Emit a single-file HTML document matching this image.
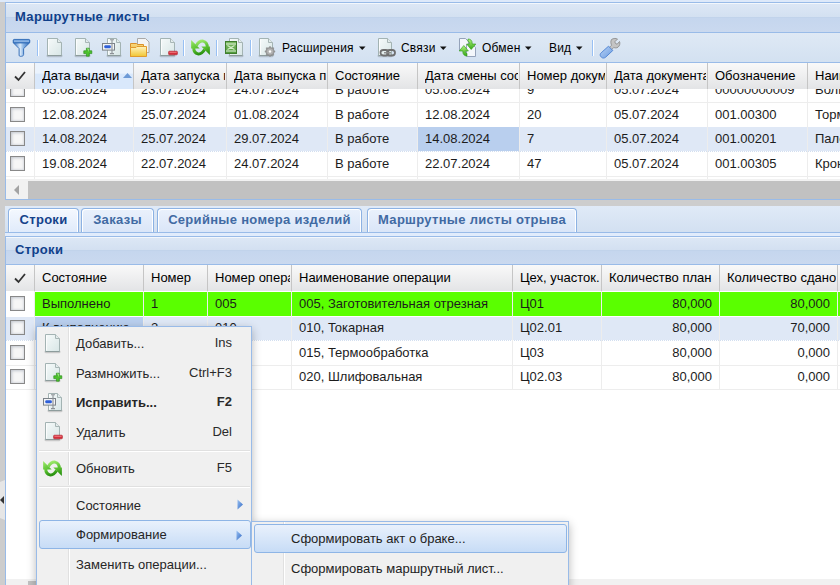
<!DOCTYPE html><html><head><meta charset="utf-8"><style>
html,body{margin:0;padding:0;width:840px;height:585px;overflow:hidden;background:#cdcdcd;font-family:"Liberation Sans", sans-serif;}
div{box-sizing:border-box;}
</style></head><body>
<div style="position:absolute;left:0px;top:0px;width:840px;height:2px;background:#dde9fa"></div>
<div style="position:absolute;left:5px;top:2px;width:835px;height:198px;background:#fff;border:1px solid #99bbe8;border-right:none"></div>
<div style="position:absolute;left:6px;top:3px;width:834px;height:29px;background:linear-gradient(#f3f7fc 0,#f3f7fc 1px,#dce7f5 1px,#d3e0f1 14px,#c1d3eb 14px,#c1d3eb 15px,#c5d6ee 15px,#cad9ef 100%)"></div>
<div style="position:absolute;left:6px;top:32px;width:834px;height:1px;background:#99bbe8"></div>
<div style="position:absolute;left:15px;top:8.20px;font-size:13px;line-height:17px;color:#0f3f8a;font-weight:bold;white-space:nowrap;letter-spacing:0.35px">Маршрутные листы</div>
<div style="position:absolute;left:6px;top:33px;width:834px;height:29px;background:linear-gradient(#dfe9f5,#d3e1f1)"></div>
<div style="position:absolute;left:6px;top:62px;width:834px;height:1px;background:#99bbe8"></div>
<svg style="position:absolute;left:13px;top:39px;overflow:visible" width="17" height="18" viewBox="0 0 17 18"><defs><linearGradient id="g1" x1="0" y1="0" x2="1" y2="0"><stop offset="0" stop-color="#2d6cc0"/><stop offset="0.42" stop-color="#dcebf9"/><stop offset="0.6" stop-color="#8fb8e6"/><stop offset="1" stop-color="#2a66b6"/></linearGradient><linearGradient id="g2" x1="0" y1="0" x2="0" y2="1"><stop offset="0" stop-color="#3f7fcf"/><stop offset="0.5" stop-color="#9cc0ea"/><stop offset="1" stop-color="#2f6cbc"/></linearGradient></defs><path d="M0.3 1 H16.7 V3.8 L10.6 9.6 V15.6 C10.6 16.6 9.6 17.3 8.4 17.3 H7.2 C6.5 17.3 6.1 16.8 6.1 16.2 V9.6 L0.3 3.8 Z" fill="url(#g1)" stroke="#2f69b4" stroke-width="0.9"/><rect x="0.4" y="0.4" width="16.2" height="3.6" rx="1" fill="url(#g2)" stroke="#2f69b4" stroke-width="0.8"/></svg>
<div style="position:absolute;left:37px;top:40px;width:1px;height:16px;background:#98c0f4;box-shadow:1px 0 0 #fff"></div>
<svg style="position:absolute;left:47px;top:38px;overflow:visible" width="15" height="19" viewBox="0 0 15 19"><defs><linearGradient id="g3" x1="0" y1="0" x2="1" y2="1"><stop offset="0" stop-color="#f6fafa"/><stop offset="1" stop-color="#d8e6e6"/></linearGradient></defs><rect x="-0.5" y="16.2" width="16" height="3" rx="1.5" fill="#000" opacity="0.16"/><path d="M0.5 0.5 H10.5 L14.5 4.5 V17.5 H0.5 Z" fill="url(#g3)" stroke="#a3b3b3" stroke-width="1"/><path d="M0.5 17.5 H14.5" stroke="#8d9c9c" stroke-width="1"/><path d="M10.5 0.5 V4.5 H14.5" fill="#e3ecec" stroke="#a8b6b6" stroke-width="1"/><path d="M1.5 1.5 V16.5" stroke="#ffffff" stroke-width="1" opacity="0.8"/></svg>
<svg style="position:absolute;left:75px;top:38px;overflow:visible" width="18" height="19" viewBox="0 0 18 19"><defs><linearGradient id="g4" x1="0" y1="0" x2="1" y2="1"><stop offset="0" stop-color="#f6fafa"/><stop offset="1" stop-color="#d8e6e6"/></linearGradient></defs><rect x="-0.5" y="16.2" width="16" height="3" rx="1.5" fill="#000" opacity="0.16"/><path d="M0.5 0.5 H10.5 L14.5 4.5 V17.5 H0.5 Z" fill="url(#g4)" stroke="#a3b3b3" stroke-width="1"/><path d="M0.5 17.5 H14.5" stroke="#8d9c9c" stroke-width="1"/><path d="M10.5 0.5 V4.5 H14.5" fill="#e3ecec" stroke="#a8b6b6" stroke-width="1"/><path d="M1.5 1.5 V16.5" stroke="#ffffff" stroke-width="1" opacity="0.8"/><path d="M11.4 10.2 H14.2 V12.8 H16.8 V15.6 H14.2 V18.2 H11.4 V15.6 H8.8 V12.8 H11.4 Z" fill="#4cc22c" stroke="#2e8f1e" stroke-width="0.7" stroke-linejoin="round"/><path d="M12 11 H13.6 V13.4" stroke="#b4f09c" stroke-width="0.7" fill="none"/></svg>
<svg style="position:absolute;left:102px;top:38px;overflow:visible" width="19" height="19" viewBox="0 0 19 19"><defs><linearGradient id="g5" x1="0" y1="0" x2="1" y2="1"><stop offset="0" stop-color="#f6fafa"/><stop offset="1" stop-color="#d8e6e6"/></linearGradient></defs><rect x="4.5" y="16.2" width="15" height="3" rx="1.5" fill="#000" opacity="0.16"/><path d="M5.5 0.5 H14.5 L18.5 4.5 V17.5 H5.5 Z" fill="url(#g5)" stroke="#a3b3b3" stroke-width="1"/><path d="M5.5 17.5 H18.5" stroke="#8d9c9c" stroke-width="1"/><path d="M14.5 0.5 V4.5 H18.5" fill="#e3ecec" stroke="#a8b6b6" stroke-width="1"/><path d="M6.5 1.5 V16.5" stroke="#ffffff" stroke-width="1" opacity="0.8"/><rect x="0.5" y="5.5" width="12" height="6.6" fill="#f2f4f6" stroke="#7c8288" stroke-width="1"/><rect x="2.3" y="7.3" width="6.5" height="3" rx="1" fill="#2f5fd8"/><path d="M8 1.8 H12 M10 1.8 V15.6 M8 15.6 H12" stroke="#8d9296" stroke-width="1.1" fill="none"/></svg>
<svg style="position:absolute;left:130px;top:38px;overflow:visible" width="20" height="19" viewBox="0 0 20 19"><defs><linearGradient id="g6" x1="0" y1="0" x2="0" y2="1"><stop offset="0" stop-color="#fff4c0"/><stop offset="1" stop-color="#f1c531"/></linearGradient><linearGradient id="g7" x1="0" y1="0" x2="0" y2="1"><stop offset="0" stop-color="#f9d87a"/><stop offset="1" stop-color="#e8a93a"/></linearGradient></defs><path d="M7.5 0.5 H15.5 L19 4 V14.5 H7.5 Z" fill="#f4f4f4" stroke="#a9a9a9" stroke-width="1"/><path d="M0.5 5.5 H6.5 L7.5 6.5 H13.5 V18.5 H0.5 Z" fill="url(#g7)" stroke="#d9902a" stroke-width="1"/><path d="M0.5 9.5 H6 L7 8.5 H16.5 V18.5 H0.5 Z" fill="url(#g6)" stroke="#e09a2c" stroke-width="1"/></svg>
<svg style="position:absolute;left:160px;top:38px;overflow:visible" width="18" height="19" viewBox="0 0 18 19"><defs><linearGradient id="g8" x1="0" y1="0" x2="1" y2="1"><stop offset="0" stop-color="#f6fafa"/><stop offset="1" stop-color="#d8e6e6"/></linearGradient></defs><rect x="-0.5" y="16.2" width="16" height="3" rx="1.5" fill="#000" opacity="0.16"/><path d="M0.5 0.5 H10.5 L14.5 4.5 V17.5 H0.5 Z" fill="url(#g8)" stroke="#a3b3b3" stroke-width="1"/><path d="M0.5 17.5 H14.5" stroke="#8d9c9c" stroke-width="1"/><path d="M10.5 0.5 V4.5 H14.5" fill="#e3ecec" stroke="#a8b6b6" stroke-width="1"/><path d="M1.5 1.5 V16.5" stroke="#ffffff" stroke-width="1" opacity="0.8"/><rect x="8.6" y="13.2" width="8.8" height="3.6" rx="0.8" fill="#d42f3b" stroke="#b01e2a" stroke-width="0.6"/><rect x="9.4" y="13.8" width="7.2" height="1" fill="#ee7a82"/></svg>
<div style="position:absolute;left:183px;top:40px;width:1px;height:16px;background:#98c0f4;box-shadow:1px 0 0 #fff"></div>
<svg style="position:absolute;left:191px;top:39px;overflow:visible" width="19" height="17" viewBox="0 0 19 17"><defs><linearGradient id="g9" x1="0" y1="0" x2="0.5" y2="1"><stop offset="0" stop-color="#a2ec70"/><stop offset="1" stop-color="#58c030"/></linearGradient><linearGradient id="g10" x1="0" y1="0" x2="0.5" y2="1"><stop offset="0" stop-color="#6cd03c"/><stop offset="1" stop-color="#2c9412"/></linearGradient></defs><path d="M5.4 6.4 C7.5 2.8 10 1.8 12 2.1 C14.6 2.6 16.3 5 16.3 8.4" stroke="url(#g9)" stroke-width="3" fill="none"/><path d="M0.1 1.0 L0.1 9.6 L8.7 9.6 Z" fill="url(#g9)"/><path d="M13.6 10.6 C11.5 14.2 9 15.2 7 14.9 C4.4 14.4 2.7 12 2.7 8.6" stroke="url(#g10)" stroke-width="3" fill="none"/><path d="M18.9 16.0 L18.9 7.4 L10.3 7.4 Z" fill="url(#g10)"/></svg>
<div style="position:absolute;left:216px;top:40px;width:1px;height:16px;background:#98c0f4;box-shadow:1px 0 0 #fff"></div>
<svg style="position:absolute;left:225px;top:38px;overflow:visible" width="18" height="19" viewBox="0 0 18 19"><defs><linearGradient id="g12" x1="0" y1="0" x2="1" y2="1"><stop offset="0" stop-color="#f6fafa"/><stop offset="1" stop-color="#d8e6e6"/></linearGradient></defs><rect x="3.5" y="16.2" width="15" height="3" rx="1.5" fill="#000" opacity="0.16"/><path d="M4.5 0.5 H13.5 L17.5 4.5 V17.5 H4.5 Z" fill="url(#g12)" stroke="#a3b3b3" stroke-width="1"/><path d="M4.5 17.5 H17.5" stroke="#8d9c9c" stroke-width="1"/><path d="M13.5 0.5 V4.5 H17.5" fill="#e3ecec" stroke="#a8b6b6" stroke-width="1"/><path d="M5.5 1.5 V16.5" stroke="#ffffff" stroke-width="1" opacity="0.8"/><defs><linearGradient id="g11" x1="0" y1="0" x2="0" y2="1"><stop offset="0" stop-color="#7dbb63"/><stop offset="1" stop-color="#4f9a3c"/></linearGradient></defs><rect x="0.5" y="3.5" width="11" height="12" fill="url(#g11)" stroke="#3f7d2e" stroke-width="1"/><path d="M1 6 H11 M1 13 H11" stroke="#e6f3df" stroke-width="1.1"/><path d="M2.5 7.5 L6 9.5 L2.5 11.5 M9.5 7.5 L6 9.5 L9.5 11.5" stroke="#d2ecc6" stroke-width="1.2" fill="none"/></svg>
<div style="position:absolute;left:250px;top:40px;width:1px;height:16px;background:#98c0f4;box-shadow:1px 0 0 #fff"></div>
<svg style="position:absolute;left:259px;top:38px;overflow:visible" width="17" height="19" viewBox="0 0 17 19"><defs><linearGradient id="g13" x1="0" y1="0" x2="1" y2="1"><stop offset="0" stop-color="#f6fafa"/><stop offset="1" stop-color="#d8e6e6"/></linearGradient></defs><rect x="-0.5" y="16.2" width="15" height="3" rx="1.5" fill="#000" opacity="0.16"/><path d="M0.5 0.5 H9.5 L13.5 4.5 V17.5 H0.5 Z" fill="url(#g13)" stroke="#a3b3b3" stroke-width="1"/><path d="M0.5 17.5 H13.5" stroke="#8d9c9c" stroke-width="1"/><path d="M9.5 0.5 V4.5 H13.5" fill="#e3ecec" stroke="#a8b6b6" stroke-width="1"/><path d="M1.5 1.5 V16.5" stroke="#ffffff" stroke-width="1" opacity="0.8"/><polygon points="16.20,13.50 14.51,14.95 14.68,17.18 12.45,17.01 11.00,18.70 9.55,17.01 7.32,17.18 7.49,14.95 5.80,13.50 7.49,12.05 7.32,9.82 9.55,9.99 11.00,8.30 12.45,9.99 14.68,9.82 14.51,12.05" fill="#9a9a9a" stroke="#7f7f7f" stroke-width="0.6"/><circle cx="11" cy="13.5" r="3" fill="#b4b4b4"/><circle cx="11" cy="13.5" r="1.2" fill="#ffffff"/></svg>
<div style="position:absolute;left:282px;top:40.03px;font-size:12px;line-height:16px;color:#000;font-weight:normal;white-space:nowrap;letter-spacing:0.2px">Расширения</div>
<svg style="position:absolute;left:359px;top:46px;overflow:visible" width="7" height="4" viewBox="0 0 7 4"><path d="M0 0.5 H6.5 L3.25 4 Z" fill="#111"/></svg>
<svg style="position:absolute;left:378px;top:38px;overflow:visible" width="18" height="19" viewBox="0 0 18 19"><defs><linearGradient id="g14" x1="0" y1="0" x2="1" y2="1"><stop offset="0" stop-color="#f6fafa"/><stop offset="1" stop-color="#d8e6e6"/></linearGradient></defs><rect x="-0.5" y="16.2" width="15" height="3" rx="1.5" fill="#000" opacity="0.16"/><path d="M0.5 0.5 H9.5 L13.5 4.5 V17.5 H0.5 Z" fill="url(#g14)" stroke="#a3b3b3" stroke-width="1"/><path d="M0.5 17.5 H13.5" stroke="#8d9c9c" stroke-width="1"/><path d="M9.5 0.5 V4.5 H13.5" fill="#e3ecec" stroke="#a8b6b6" stroke-width="1"/><path d="M1.5 1.5 V16.5" stroke="#ffffff" stroke-width="1" opacity="0.8"/><rect x="2.5" y="12" width="8" height="5.5" rx="2.7" fill="none" stroke="#6f6f6f" stroke-width="1.8"/><rect x="9" y="12" width="8" height="5.5" rx="2.7" fill="none" stroke="#6f6f6f" stroke-width="1.8"/><path d="M6 14.75 H13" stroke="#8a8a8a" stroke-width="1.4"/></svg>
<div style="position:absolute;left:401px;top:40.03px;font-size:12px;line-height:16px;color:#000;font-weight:normal;white-space:nowrap;letter-spacing:0.2px">Связи</div>
<svg style="position:absolute;left:440px;top:46px;overflow:visible" width="7" height="4" viewBox="0 0 7 4"><path d="M0 0.5 H6.5 L3.25 4 Z" fill="#111"/></svg>
<svg style="position:absolute;left:459px;top:38px;overflow:visible" width="17" height="19" viewBox="0 0 17 19"><defs><linearGradient id="g15" x1="0" y1="0" x2="0" y2="1"><stop offset="0" stop-color="#b0f27e"/><stop offset="1" stop-color="#36a816"/></linearGradient></defs><path d="M0.5 0.5 H6.5 L9.5 3.5 V12.5 H0.5 Z" fill="#f4f7fb" stroke="#95a3ba" stroke-width="1"/><path d="M7.5 6.5 H13.5 L16.5 9.5 V18.5 H7.5 Z" fill="#f4f7fb" stroke="#95a3ba" stroke-width="1"/><path d="M9 1 C11.5 1 13.2 2.5 13.2 5.2 V6 H16.8 L12.2 11.5 L7.6 6 H10.6 V5.4 C10.6 4.2 10 3.6 9 3.6 Z" fill="url(#g15)" stroke="#2c9a12" stroke-width="0.6"/><path d="M8 18 C5.5 18 3.8 16.5 3.8 13.8 V13 H0.2 L4.8 7.5 L9.4 13 H6.4 V13.6 C6.4 14.8 7 15.4 8 15.4 Z" fill="url(#g15)" stroke="#2c9a12" stroke-width="0.6"/></svg>
<div style="position:absolute;left:482px;top:40.03px;font-size:12px;line-height:16px;color:#000;font-weight:normal;white-space:nowrap;letter-spacing:0.2px">Обмен</div>
<svg style="position:absolute;left:525px;top:46px;overflow:visible" width="7" height="4" viewBox="0 0 7 4"><path d="M0 0.5 H6.5 L3.25 4 Z" fill="#111"/></svg>
<div style="position:absolute;left:549px;top:40.03px;font-size:12px;line-height:16px;color:#000;font-weight:normal;white-space:nowrap;letter-spacing:0.2px">Вид</div>
<svg style="position:absolute;left:576px;top:46px;overflow:visible" width="7" height="4" viewBox="0 0 7 4"><path d="M0 0.5 H6.5 L3.25 4 Z" fill="#111"/></svg>
<div style="position:absolute;left:592px;top:40px;width:1px;height:16px;background:#98c0f4;box-shadow:1px 0 0 #fff"></div>
<svg style="position:absolute;left:600px;top:38px;overflow:visible" width="20" height="20" viewBox="0 0 20 20"><defs><linearGradient id="g16" x1="0" y1="0" x2="1" y2="1"><stop offset="0" stop-color="#b9d3f6"/><stop offset="1" stop-color="#6a9be0"/></linearGradient></defs><path d="M11.5 1.5 C13.5 0 16.5 0.3 17.5 1 L14.8 3.8 L15.5 5.5 L17.2 6.2 L19.5 3.5 C20.3 5 19.8 8 18 9.2 C16.5 10.2 14.8 10 13.8 9.4 L11 12.2 L8.8 10 L11.6 7.2 C11 6.2 10.3 3.5 11.5 1.5 Z" fill="#c4c4c4" stroke="#8d8d8d" stroke-width="0.9"/><path d="M8.5 8.2 L12.8 12.5 L5.5 19.3 C4.2 20.3 2.5 20.3 1.5 19.3 L0.8 18.5 C-0.2 17.5 0 15.8 1.2 14.8 Z" fill="url(#g16)" stroke="#4a7fd0" stroke-width="0.9"/></svg>
<div style="position:absolute;left:6px;top:63px;width:834px;height:26px;background:linear-gradient(#f9f9f9,#e3e4e6)"></div>
<div style="position:absolute;left:34px;top:63px;width:99px;height:26px;background:linear-gradient(#ebf3fd 0,#ebf3fd 40%,#d9e8fb 41%,#d9e8fb)"></div>
<div style="position:absolute;left:34px;top:63px;width:1px;height:26px;background:#c5c5c5"></div>
<div style="position:absolute;left:133px;top:63px;width:1px;height:26px;background:#c5c5c5"></div>
<div style="position:absolute;left:226px;top:63px;width:1px;height:26px;background:#c5c5c5"></div>
<div style="position:absolute;left:327px;top:63px;width:1px;height:26px;background:#c5c5c5"></div>
<div style="position:absolute;left:417px;top:63px;width:1px;height:26px;background:#c5c5c5"></div>
<div style="position:absolute;left:519px;top:63px;width:1px;height:26px;background:#c5c5c5"></div>
<div style="position:absolute;left:606px;top:63px;width:1px;height:26px;background:#c5c5c5"></div>
<div style="position:absolute;left:707px;top:63px;width:1px;height:26px;background:#c5c5c5"></div>
<div style="position:absolute;left:807px;top:63px;width:1px;height:26px;background:#c5c5c5"></div>
<div style="position:absolute;left:42px;top:67px;width:90px;height:18px;overflow:hidden;font-size:13px;line-height:17px;white-space:nowrap">Дата выдачи</div>
<div style="position:absolute;left:141px;top:67px;width:84px;height:18px;overflow:hidden;font-size:13px;line-height:17px;white-space:nowrap">Дата запуска п</div>
<div style="position:absolute;left:234px;top:67px;width:92px;height:18px;overflow:hidden;font-size:13px;line-height:17px;white-space:nowrap">Дата выпуска п</div>
<div style="position:absolute;left:335px;top:67px;width:81px;height:18px;overflow:hidden;font-size:13px;line-height:17px;white-space:nowrap">Состояние</div>
<div style="position:absolute;left:425px;top:67px;width:93px;height:18px;overflow:hidden;font-size:13px;line-height:17px;white-space:nowrap">Дата смены сос</div>
<div style="position:absolute;left:527px;top:67px;width:78px;height:18px;overflow:hidden;font-size:13px;line-height:17px;white-space:nowrap">Номер докум</div>
<div style="position:absolute;left:614px;top:67px;width:92px;height:18px;overflow:hidden;font-size:13px;line-height:17px;white-space:nowrap">Дата документа</div>
<div style="position:absolute;left:715px;top:67px;width:91px;height:18px;overflow:hidden;font-size:13px;line-height:17px;white-space:nowrap">Обозначение</div>
<div style="position:absolute;left:815px;top:67px;width:84px;height:18px;overflow:hidden;font-size:13px;line-height:17px;white-space:nowrap">Наименование</div>
<svg style="position:absolute;left:14px;top:71px;overflow:visible" width="12" height="10" viewBox="0 0 12 10"><path d="M1 5.5 L4.5 9 L11 1" stroke="#333" stroke-width="1.8" fill="none"/></svg>
<svg style="position:absolute;left:123px;top:73px;overflow:visible" width="9" height="5" viewBox="0 0 9 5"><path d="M0 5 L4.5 0 L9 5 Z" fill="#6d9ad6"/></svg>
<div style="position:absolute;left:6px;top:89px;width:834px;height:90px;overflow:hidden">
<div style="position:absolute;left:0;top:-11px;width:834px;height:24px;background:#fff"></div>
<div style="position:absolute;left:0;top:13px;width:834px;height:1px;background:#ededed"></div>
<div style="position:absolute;left:4px;top:-7px;width:15px;height:15px;border:1px solid #888;background:#f6f6f6;box-shadow:inset 1px 1px 3px #c2c6ce, inset -1px -1px 2px #e2e4e8"></div>
<div style="position:absolute;left:36px;top:-8px;font-size:13px;line-height:17px;color:#1c1c1c;white-space:nowrap">05.08.2024</div>
<div style="position:absolute;left:135px;top:-8px;font-size:13px;line-height:17px;color:#1c1c1c;white-space:nowrap">23.07.2024</div>
<div style="position:absolute;left:228px;top:-8px;font-size:13px;line-height:17px;color:#1c1c1c;white-space:nowrap">24.07.2024</div>
<div style="position:absolute;left:329px;top:-8px;font-size:13px;line-height:17px;color:#1c1c1c;white-space:nowrap">В работе</div>
<div style="position:absolute;left:419px;top:-8px;font-size:13px;line-height:17px;color:#1c1c1c;white-space:nowrap">05.08.2024</div>
<div style="position:absolute;left:521px;top:-8px;font-size:13px;line-height:17px;color:#1c1c1c;white-space:nowrap">9</div>
<div style="position:absolute;left:608px;top:-8px;font-size:13px;line-height:17px;color:#1c1c1c;white-space:nowrap">05.07.2024</div>
<div style="position:absolute;left:709px;top:-8px;font-size:13px;line-height:17px;color:#1c1c1c;white-space:nowrap">00000000009</div>
<div style="position:absolute;left:809px;top:-8px;font-size:13px;line-height:17px;color:#1c1c1c;white-space:nowrap">Волг</div>
<div style="position:absolute;left:0;top:14px;width:834px;height:24px;background:#fff"></div>
<div style="position:absolute;left:0;top:38px;width:834px;height:1px;background:#ededed"></div>
<div style="position:absolute;left:4px;top:18px;width:15px;height:15px;border:1px solid #888;background:#f6f6f6;box-shadow:inset 1px 1px 3px #c2c6ce, inset -1px -1px 2px #e2e4e8"></div>
<div style="position:absolute;left:36px;top:17px;font-size:13px;line-height:17px;color:#1c1c1c;white-space:nowrap">12.08.2024</div>
<div style="position:absolute;left:135px;top:17px;font-size:13px;line-height:17px;color:#1c1c1c;white-space:nowrap">25.07.2024</div>
<div style="position:absolute;left:228px;top:17px;font-size:13px;line-height:17px;color:#1c1c1c;white-space:nowrap">01.08.2024</div>
<div style="position:absolute;left:329px;top:17px;font-size:13px;line-height:17px;color:#1c1c1c;white-space:nowrap">В работе</div>
<div style="position:absolute;left:419px;top:17px;font-size:13px;line-height:17px;color:#1c1c1c;white-space:nowrap">12.08.2024</div>
<div style="position:absolute;left:521px;top:17px;font-size:13px;line-height:17px;color:#1c1c1c;white-space:nowrap">20</div>
<div style="position:absolute;left:608px;top:17px;font-size:13px;line-height:17px;color:#1c1c1c;white-space:nowrap">05.07.2024</div>
<div style="position:absolute;left:709px;top:17px;font-size:13px;line-height:17px;color:#1c1c1c;white-space:nowrap">001.00300</div>
<div style="position:absolute;left:809px;top:17px;font-size:13px;line-height:17px;color:#1c1c1c;white-space:nowrap">Торм</div>
<div style="position:absolute;left:0;top:38px;width:834px;height:24px;background:#dfe8f6"></div>
<div style="position:absolute;left:412px;top:38px;width:101px;height:24px;background:#b9cfee"></div>
<div style="position:absolute;left:0;top:62px;width:834px;height:1px;background:linear-gradient(90deg,#d3dff0 50%,#ffffff 50%);background-size:2px 1px"></div>
<div style="position:absolute;left:4px;top:42px;width:15px;height:15px;border:1px solid #888;background:#f6f6f6;box-shadow:inset 1px 1px 3px #c2c6ce, inset -1px -1px 2px #e2e4e8"></div>
<div style="position:absolute;left:36px;top:41px;font-size:13px;line-height:17px;color:#1c1c1c;white-space:nowrap">14.08.2024</div>
<div style="position:absolute;left:135px;top:41px;font-size:13px;line-height:17px;color:#1c1c1c;white-space:nowrap">25.07.2024</div>
<div style="position:absolute;left:228px;top:41px;font-size:13px;line-height:17px;color:#1c1c1c;white-space:nowrap">29.07.2024</div>
<div style="position:absolute;left:329px;top:41px;font-size:13px;line-height:17px;color:#1c1c1c;white-space:nowrap">В работе</div>
<div style="position:absolute;left:419px;top:41px;font-size:13px;line-height:17px;color:#1c1c1c;white-space:nowrap">14.08.2024</div>
<div style="position:absolute;left:521px;top:41px;font-size:13px;line-height:17px;color:#1c1c1c;white-space:nowrap">7</div>
<div style="position:absolute;left:608px;top:41px;font-size:13px;line-height:17px;color:#1c1c1c;white-space:nowrap">05.07.2024</div>
<div style="position:absolute;left:709px;top:41px;font-size:13px;line-height:17px;color:#1c1c1c;white-space:nowrap">001.00201</div>
<div style="position:absolute;left:809px;top:41px;font-size:13px;line-height:17px;color:#1c1c1c;white-space:nowrap">Пало</div>
<div style="position:absolute;left:0;top:63px;width:834px;height:24px;background:#fff"></div>
<div style="position:absolute;left:0;top:87px;width:834px;height:1px;background:#ededed"></div>
<div style="position:absolute;left:4px;top:67px;width:15px;height:15px;border:1px solid #888;background:#f6f6f6;box-shadow:inset 1px 1px 3px #c2c6ce, inset -1px -1px 2px #e2e4e8"></div>
<div style="position:absolute;left:36px;top:66px;font-size:13px;line-height:17px;color:#1c1c1c;white-space:nowrap">19.08.2024</div>
<div style="position:absolute;left:135px;top:66px;font-size:13px;line-height:17px;color:#1c1c1c;white-space:nowrap">22.07.2024</div>
<div style="position:absolute;left:228px;top:66px;font-size:13px;line-height:17px;color:#1c1c1c;white-space:nowrap">24.07.2024</div>
<div style="position:absolute;left:329px;top:66px;font-size:13px;line-height:17px;color:#1c1c1c;white-space:nowrap">В работе</div>
<div style="position:absolute;left:419px;top:66px;font-size:13px;line-height:17px;color:#1c1c1c;white-space:nowrap">22.07.2024</div>
<div style="position:absolute;left:521px;top:66px;font-size:13px;line-height:17px;color:#1c1c1c;white-space:nowrap">47</div>
<div style="position:absolute;left:608px;top:66px;font-size:13px;line-height:17px;color:#1c1c1c;white-space:nowrap">05.07.2024</div>
<div style="position:absolute;left:709px;top:66px;font-size:13px;line-height:17px;color:#1c1c1c;white-space:nowrap">001.00305</div>
<div style="position:absolute;left:809px;top:66px;font-size:13px;line-height:17px;color:#1c1c1c;white-space:nowrap">Крон</div>
<div style="position:absolute;left:28px;top:0;width:1px;height:90px;background:#ededed"></div>
<div style="position:absolute;left:127px;top:0;width:1px;height:90px;background:#ededed"></div>
<div style="position:absolute;left:220px;top:0;width:1px;height:90px;background:#ededed"></div>
<div style="position:absolute;left:321px;top:0;width:1px;height:90px;background:#ededed"></div>
<div style="position:absolute;left:411px;top:0;width:1px;height:90px;background:#ededed"></div>
<div style="position:absolute;left:513px;top:0;width:1px;height:90px;background:#ededed"></div>
<div style="position:absolute;left:600px;top:0;width:1px;height:90px;background:#ededed"></div>
<div style="position:absolute;left:701px;top:0;width:1px;height:90px;background:#ededed"></div>
<div style="position:absolute;left:801px;top:0;width:1px;height:90px;background:#ededed"></div>
</div>
<div style="position:absolute;left:6px;top:179px;width:834px;height:20px;background:#f1f1f1"></div>
<div style="position:absolute;left:28px;top:181px;width:812px;height:18px;background:#c1c1c1"></div>
<svg style="position:absolute;left:13px;top:185px" width="8" height="11"><path d="M6 0 L6 10 L1 5 Z" fill="#a3a3a3"/></svg>
<div style="position:absolute;left:5px;top:199px;width:835px;height:1px;background:#99bbe8"></div>
<div style="position:absolute;left:5px;top:206px;width:835px;height:27px;background:linear-gradient(#e0eaf7,#d2e0f1)"></div>
<div style="position:absolute;left:8px;top:208px;width:71px;height:24px;border:1px solid #8db2e3;border-bottom:none;border-radius:4px 4px 0 0;background:linear-gradient(#f4f8fe,#e0ebfb);box-shadow:inset 1px 1px 0 #fff,inset -1px 0 0 #fff"></div>
<div style="position:absolute;left:8px;top:211px;width:71px;text-align:center;font-size:13px;line-height:17px;font-weight:bold;letter-spacing:0.3px;color:#15428b;white-space:nowrap">Строки</div>
<div style="position:absolute;left:81px;top:208px;width:73px;height:24px;border:1px solid #8db2e3;border-bottom:none;border-radius:4px 4px 0 0;background:linear-gradient(#eaf1fc,#dae6f8);box-shadow:inset 1px 1px 0 #fff,inset -1px 0 0 #fff"></div>
<div style="position:absolute;left:81px;top:211px;width:73px;text-align:center;font-size:13px;line-height:17px;font-weight:bold;letter-spacing:0.3px;color:#416aa3;white-space:nowrap">Заказы</div>
<div style="position:absolute;left:157px;top:208px;width:205px;height:24px;border:1px solid #8db2e3;border-bottom:none;border-radius:4px 4px 0 0;background:linear-gradient(#eaf1fc,#dae6f8);box-shadow:inset 1px 1px 0 #fff,inset -1px 0 0 #fff"></div>
<div style="position:absolute;left:157px;top:211px;width:205px;text-align:center;font-size:13px;line-height:17px;font-weight:bold;letter-spacing:0.3px;color:#416aa3;white-space:nowrap">Серийные номера изделий</div>
<div style="position:absolute;left:367px;top:208px;width:210px;height:24px;border:1px solid #8db2e3;border-bottom:none;border-radius:4px 4px 0 0;background:linear-gradient(#eaf1fc,#dae6f8);box-shadow:inset 1px 1px 0 #fff,inset -1px 0 0 #fff"></div>
<div style="position:absolute;left:367px;top:211px;width:210px;text-align:center;font-size:13px;line-height:17px;font-weight:bold;letter-spacing:0.3px;color:#416aa3;white-space:nowrap">Маршрутные листы отрыва</div>
<div style="position:absolute;left:5px;top:232px;width:835px;height:1px;background:#99bbe8"></div>
<div style="position:absolute;left:5px;top:233px;width:835px;height:3px;background:#e1ecfc"></div>
<div style="position:absolute;left:5px;top:236px;width:835px;height:349px;background:#fff;border:1px solid #99bbe8;border-right:none;border-bottom:none"></div>
<div style="position:absolute;left:6px;top:237px;width:834px;height:27px;background:linear-gradient(#f3f7fc 0,#f3f7fc 1px,#dce7f5 1px,#d3e0f1 13px,#c1d3eb 13px,#c1d3eb 14px,#c5d6ee 14px,#cad9ef 100%)"></div>
<div style="position:absolute;left:6px;top:264px;width:834px;height:1px;background:#99bbe8"></div>
<div style="position:absolute;left:15px;top:241.20px;font-size:13px;line-height:17px;color:#0f3f8a;font-weight:bold;white-space:nowrap;letter-spacing:0.35px">Строки</div>
<div style="position:absolute;left:6px;top:265px;width:834px;height:26px;background:linear-gradient(#f9f9f9,#e3e4e6)"></div>
<div style="position:absolute;left:34px;top:265px;width:1px;height:26px;background:#c5c5c5"></div>
<div style="position:absolute;left:143px;top:265px;width:1px;height:26px;background:#c5c5c5"></div>
<div style="position:absolute;left:207px;top:265px;width:1px;height:26px;background:#c5c5c5"></div>
<div style="position:absolute;left:291px;top:265px;width:1px;height:26px;background:#c5c5c5"></div>
<div style="position:absolute;left:512px;top:265px;width:1px;height:26px;background:#c5c5c5"></div>
<div style="position:absolute;left:601px;top:265px;width:1px;height:26px;background:#c5c5c5"></div>
<div style="position:absolute;left:719px;top:265px;width:1px;height:26px;background:#c5c5c5"></div>
<div style="position:absolute;left:837px;top:265px;width:1px;height:26px;background:#c5c5c5"></div>
<div style="position:absolute;left:42px;top:269px;width:100px;height:18px;overflow:hidden;font-size:13px;line-height:17px;white-space:nowrap">Состояние</div>
<div style="position:absolute;left:151px;top:269px;width:55px;height:18px;overflow:hidden;font-size:13px;line-height:17px;white-space:nowrap">Номер</div>
<div style="position:absolute;left:215px;top:269px;width:75px;height:18px;overflow:hidden;font-size:13px;line-height:17px;white-space:nowrap">Номер опера</div>
<div style="position:absolute;left:299px;top:269px;width:212px;height:18px;overflow:hidden;font-size:13px;line-height:17px;white-space:nowrap">Наименование операции</div>
<div style="position:absolute;left:520px;top:269px;width:80px;height:18px;overflow:hidden;font-size:13px;line-height:17px;white-space:nowrap">Цех, участок.</div>
<div style="position:absolute;left:609px;top:269px;width:109px;height:18px;overflow:hidden;font-size:13px;line-height:17px;white-space:nowrap">Количество план</div>
<div style="position:absolute;left:727px;top:269px;width:109px;height:18px;overflow:hidden;font-size:13px;line-height:17px;white-space:nowrap">Количество сдано</div>
<svg style="position:absolute;left:14px;top:273px;overflow:visible" width="12" height="10" viewBox="0 0 12 10"><path d="M1 5.5 L4.5 9 L11 1" stroke="#333" stroke-width="1.8" fill="none"/></svg>
<div style="position:absolute;left:6px;top:292px;width:834px;height:24px;background:#fff"></div>
<div style="position:absolute;left:35px;top:292px;width:805px;height:24px;background:#5aff00"></div>
<div style="position:absolute;left:6px;top:316px;width:834px;height:1px;background:#fff"></div>
<div style="position:absolute;left:10px;top:296px;width:15px;height:15px;border:1px solid #888;background:#f6f6f6;box-shadow:inset 1px 1px 3px #c2c6ce, inset -1px -1px 2px #e2e4e8"></div>
<div style="position:absolute;left:42px;top:295px;font-size:13px;line-height:17px;color:#1c1c1c;white-space:nowrap">Выполнено</div>
<div style="position:absolute;left:151px;top:295px;font-size:13px;line-height:17px;color:#1c1c1c;white-space:nowrap">1</div>
<div style="position:absolute;left:215px;top:295px;font-size:13px;line-height:17px;color:#1c1c1c;white-space:nowrap">005</div>
<div style="position:absolute;left:299px;top:295px;font-size:13px;line-height:17px;color:#1c1c1c;white-space:nowrap">005, Заготовительная отрезная</div>
<div style="position:absolute;left:520px;top:295px;font-size:13px;line-height:17px;color:#1c1c1c;white-space:nowrap">Ц01</div>
<div style="position:absolute;left:602px;top:295px;width:110px;text-align:right;font-size:13px;line-height:17px;color:#1c1c1c;white-space:nowrap">80,000</div>
<div style="position:absolute;left:720px;top:295px;width:110px;text-align:right;font-size:13px;line-height:17px;color:#1c1c1c;white-space:nowrap">80,000</div>
<div style="position:absolute;left:6px;top:317px;width:834px;height:23px;background:#dfe8f6"></div>
<div style="position:absolute;left:35px;top:317px;width:108px;height:23px;background:#b9cfee"></div>
<div style="position:absolute;left:6px;top:340px;width:834px;height:1px;background:linear-gradient(90deg,#d3dff0 50%,#ffffff 50%);background-size:2px 1px"></div>
<div style="position:absolute;left:10px;top:320px;width:15px;height:15px;border:1px solid #888;background:#f6f6f6;box-shadow:inset 1px 1px 3px #c2c6ce, inset -1px -1px 2px #e2e4e8"></div>
<div style="position:absolute;left:42px;top:319px;font-size:13px;line-height:17px;color:#1c1c1c;white-space:nowrap">К выполнению</div>
<div style="position:absolute;left:151px;top:319px;font-size:13px;line-height:17px;color:#1c1c1c;white-space:nowrap">2</div>
<div style="position:absolute;left:215px;top:319px;font-size:13px;line-height:17px;color:#1c1c1c;white-space:nowrap">010</div>
<div style="position:absolute;left:299px;top:319px;font-size:13px;line-height:17px;color:#1c1c1c;white-space:nowrap">010, Токарная</div>
<div style="position:absolute;left:520px;top:319px;font-size:13px;line-height:17px;color:#1c1c1c;white-space:nowrap">Ц02.01</div>
<div style="position:absolute;left:602px;top:319px;width:110px;text-align:right;font-size:13px;line-height:17px;color:#1c1c1c;white-space:nowrap">80,000</div>
<div style="position:absolute;left:720px;top:319px;width:110px;text-align:right;font-size:13px;line-height:17px;color:#1c1c1c;white-space:nowrap">70,000</div>
<div style="position:absolute;left:6px;top:341px;width:834px;height:24px;background:#fff"></div>
<div style="position:absolute;left:6px;top:365px;width:834px;height:1px;background:#ededed"></div>
<div style="position:absolute;left:10px;top:345px;width:15px;height:15px;border:1px solid #888;background:#f6f6f6;box-shadow:inset 1px 1px 3px #c2c6ce, inset -1px -1px 2px #e2e4e8"></div>
<div style="position:absolute;left:42px;top:344px;font-size:13px;line-height:17px;color:#1c1c1c;white-space:nowrap"></div>
<div style="position:absolute;left:151px;top:344px;font-size:13px;line-height:17px;color:#1c1c1c;white-space:nowrap">3</div>
<div style="position:absolute;left:215px;top:344px;font-size:13px;line-height:17px;color:#1c1c1c;white-space:nowrap">015</div>
<div style="position:absolute;left:299px;top:344px;font-size:13px;line-height:17px;color:#1c1c1c;white-space:nowrap">015, Термообработка</div>
<div style="position:absolute;left:520px;top:344px;font-size:13px;line-height:17px;color:#1c1c1c;white-space:nowrap">Ц03</div>
<div style="position:absolute;left:602px;top:344px;width:110px;text-align:right;font-size:13px;line-height:17px;color:#1c1c1c;white-space:nowrap">80,000</div>
<div style="position:absolute;left:720px;top:344px;width:110px;text-align:right;font-size:13px;line-height:17px;color:#1c1c1c;white-space:nowrap">0,000</div>
<div style="position:absolute;left:6px;top:366px;width:834px;height:23px;background:#fff"></div>
<div style="position:absolute;left:6px;top:389px;width:834px;height:1px;background:#ededed"></div>
<div style="position:absolute;left:10px;top:369px;width:15px;height:15px;border:1px solid #888;background:#f6f6f6;box-shadow:inset 1px 1px 3px #c2c6ce, inset -1px -1px 2px #e2e4e8"></div>
<div style="position:absolute;left:42px;top:368px;font-size:13px;line-height:17px;color:#1c1c1c;white-space:nowrap"></div>
<div style="position:absolute;left:151px;top:368px;font-size:13px;line-height:17px;color:#1c1c1c;white-space:nowrap">4</div>
<div style="position:absolute;left:215px;top:368px;font-size:13px;line-height:17px;color:#1c1c1c;white-space:nowrap">020</div>
<div style="position:absolute;left:299px;top:368px;font-size:13px;line-height:17px;color:#1c1c1c;white-space:nowrap">020, Шлифовальная</div>
<div style="position:absolute;left:520px;top:368px;font-size:13px;line-height:17px;color:#1c1c1c;white-space:nowrap">Ц02.03</div>
<div style="position:absolute;left:602px;top:368px;width:110px;text-align:right;font-size:13px;line-height:17px;color:#1c1c1c;white-space:nowrap">80,000</div>
<div style="position:absolute;left:720px;top:368px;width:110px;text-align:right;font-size:13px;line-height:17px;color:#1c1c1c;white-space:nowrap">0,000</div>
<div style="position:absolute;left:34px;top:291px;width:1px;height:98px;background:#ededed"></div>
<div style="position:absolute;left:143px;top:291px;width:1px;height:98px;background:#ededed"></div>
<div style="position:absolute;left:207px;top:291px;width:1px;height:98px;background:#ededed"></div>
<div style="position:absolute;left:291px;top:291px;width:1px;height:98px;background:#ededed"></div>
<div style="position:absolute;left:512px;top:291px;width:1px;height:98px;background:#ededed"></div>
<div style="position:absolute;left:601px;top:291px;width:1px;height:98px;background:#ededed"></div>
<div style="position:absolute;left:719px;top:291px;width:1px;height:98px;background:#ededed"></div>
<div style="position:absolute;left:837px;top:291px;width:1px;height:98px;background:#ededed"></div>
<div style="position:absolute;left:6px;top:579px;width:834px;height:6px;background:#f1f1f1"></div>
<div style="position:absolute;left:28px;top:581px;width:480px;height:4px;background:#c1c1c1"></div>
<svg style="position:absolute;left:0;top:480px" width="5" height="40"><path d="M0 2 L5 0 L5 40 L0 38 Z" fill="#e6e6e6"/><path d="M4 16 L4 24 L0 20 Z" fill="#333"/></svg>
<div style="position:absolute;left:36px;top:326px;width:216px;height:262px;box-shadow:0 3px 9px rgba(0,0,0,0.28)"></div>
<div style="position:absolute;left:251px;top:521px;width:318px;height:70px;box-shadow:0 3px 9px rgba(0,0,0,0.28)"></div>
<div style="position:absolute;left:36px;top:326px;width:216px;height:262px;background:#f0f0f0;border:1px solid #99bbe8;border-bottom:none"></div>
<div style="position:absolute;left:68px;top:327px;width:1px;height:122px;background:#e0e0e0"></div>
<div style="position:absolute;left:69px;top:327px;width:1px;height:122px;background:#fff"></div>
<div style="position:absolute;left:68px;top:452px;width:1px;height:33px;background:#e0e0e0"></div>
<div style="position:absolute;left:69px;top:452px;width:1px;height:33px;background:#fff"></div>
<div style="position:absolute;left:68px;top:488px;width:1px;height:97px;background:#e0e0e0"></div>
<div style="position:absolute;left:69px;top:488px;width:1px;height:97px;background:#fff"></div>
<div style="position:absolute;left:39px;top:450px;width:211px;height:1px;background:#e0e0e0"></div>
<div style="position:absolute;left:39px;top:451px;width:211px;height:1px;background:#fff"></div>
<div style="position:absolute;left:39px;top:486px;width:211px;height:1px;background:#e0e0e0"></div>
<div style="position:absolute;left:39px;top:487px;width:211px;height:1px;background:#fff"></div>
<div style="position:absolute;left:39px;top:520px;width:212px;height:29px;border:1px solid #8eb5e6;border-radius:3px;background:linear-gradient(#e9f1fc,#c7dcf6)"></div>
<div style="position:absolute;left:76px;top:335.20px;font-size:13px;line-height:17px;color:#262626;font-weight:normal;white-space:nowrap;">Добавить...</div>
<div style="position:absolute;right:608px;top:334.20px;font-size:13px;line-height:17px;color:#2a2a2a;font-weight:normal;white-space:nowrap;text-align:right;">Ins</div>
<div style="position:absolute;left:76px;top:365.20px;font-size:13px;line-height:17px;color:#262626;font-weight:normal;white-space:nowrap;">Размножить...</div>
<div style="position:absolute;right:608px;top:364.20px;font-size:13px;line-height:17px;color:#2a2a2a;font-weight:normal;white-space:nowrap;text-align:right;">Ctrl+F3</div>
<div style="position:absolute;left:76px;top:394.20px;font-size:13px;line-height:17px;color:#262626;font-weight:bold;white-space:nowrap;">Исправить...</div>
<div style="position:absolute;right:608px;top:393.20px;font-size:13px;line-height:17px;color:#2a2a2a;font-weight:bold;white-space:nowrap;text-align:right;">F2</div>
<div style="position:absolute;left:76px;top:424.20px;font-size:13px;line-height:17px;color:#262626;font-weight:normal;white-space:nowrap;">Удалить</div>
<div style="position:absolute;right:608px;top:423.20px;font-size:13px;line-height:17px;color:#2a2a2a;font-weight:normal;white-space:nowrap;text-align:right;">Del</div>
<div style="position:absolute;left:76px;top:460.20px;font-size:13px;line-height:17px;color:#262626;font-weight:normal;white-space:nowrap;">Обновить</div>
<div style="position:absolute;right:608px;top:459.20px;font-size:13px;line-height:17px;color:#2a2a2a;font-weight:normal;white-space:nowrap;text-align:right;">F5</div>
<div style="position:absolute;left:76px;top:497.20px;font-size:13px;line-height:17px;color:#262626;font-weight:normal;white-space:nowrap;">Состояние</div>
<div style="position:absolute;left:76px;top:526.20px;font-size:13px;line-height:17px;color:#262626;font-weight:normal;white-space:nowrap;">Формирование</div>
<div style="position:absolute;left:76px;top:556.20px;font-size:13px;line-height:17px;color:#262626;font-weight:normal;white-space:nowrap;">Заменить операции...</div>
<svg style="position:absolute;left:45px;top:334px;overflow:visible" width="15" height="19" viewBox="0 0 15 19"><defs><linearGradient id="g17" x1="0" y1="0" x2="1" y2="1"><stop offset="0" stop-color="#f6fafa"/><stop offset="1" stop-color="#d8e6e6"/></linearGradient></defs><rect x="-0.5" y="16.2" width="16" height="3" rx="1.5" fill="#000" opacity="0.16"/><path d="M0.5 0.5 H10.5 L14.5 4.5 V17.5 H0.5 Z" fill="url(#g17)" stroke="#a3b3b3" stroke-width="1"/><path d="M0.5 17.5 H14.5" stroke="#8d9c9c" stroke-width="1"/><path d="M10.5 0.5 V4.5 H14.5" fill="#e3ecec" stroke="#a8b6b6" stroke-width="1"/><path d="M1.5 1.5 V16.5" stroke="#ffffff" stroke-width="1" opacity="0.8"/></svg>
<svg style="position:absolute;left:45px;top:363px;overflow:visible" width="18" height="19" viewBox="0 0 18 19"><defs><linearGradient id="g18" x1="0" y1="0" x2="1" y2="1"><stop offset="0" stop-color="#f6fafa"/><stop offset="1" stop-color="#d8e6e6"/></linearGradient></defs><rect x="-0.5" y="16.2" width="16" height="3" rx="1.5" fill="#000" opacity="0.16"/><path d="M0.5 0.5 H10.5 L14.5 4.5 V17.5 H0.5 Z" fill="url(#g18)" stroke="#a3b3b3" stroke-width="1"/><path d="M0.5 17.5 H14.5" stroke="#8d9c9c" stroke-width="1"/><path d="M10.5 0.5 V4.5 H14.5" fill="#e3ecec" stroke="#a8b6b6" stroke-width="1"/><path d="M1.5 1.5 V16.5" stroke="#ffffff" stroke-width="1" opacity="0.8"/><path d="M11.4 10.2 H14.2 V12.8 H16.8 V15.6 H14.2 V18.2 H11.4 V15.6 H8.8 V12.8 H11.4 Z" fill="#4cc22c" stroke="#2e8f1e" stroke-width="0.7" stroke-linejoin="round"/><path d="M12 11 H13.6 V13.4" stroke="#b4f09c" stroke-width="0.7" fill="none"/></svg>
<svg style="position:absolute;left:43px;top:393px;overflow:visible" width="19" height="19" viewBox="0 0 19 19"><defs><linearGradient id="g19" x1="0" y1="0" x2="1" y2="1"><stop offset="0" stop-color="#f6fafa"/><stop offset="1" stop-color="#d8e6e6"/></linearGradient></defs><rect x="4.5" y="16.2" width="15" height="3" rx="1.5" fill="#000" opacity="0.16"/><path d="M5.5 0.5 H14.5 L18.5 4.5 V17.5 H5.5 Z" fill="url(#g19)" stroke="#a3b3b3" stroke-width="1"/><path d="M5.5 17.5 H18.5" stroke="#8d9c9c" stroke-width="1"/><path d="M14.5 0.5 V4.5 H18.5" fill="#e3ecec" stroke="#a8b6b6" stroke-width="1"/><path d="M6.5 1.5 V16.5" stroke="#ffffff" stroke-width="1" opacity="0.8"/><rect x="0.5" y="5.5" width="12" height="6.6" fill="#f2f4f6" stroke="#7c8288" stroke-width="1"/><rect x="2.3" y="7.3" width="6.5" height="3" rx="1" fill="#2f5fd8"/><path d="M8 1.8 H12 M10 1.8 V15.6 M8 15.6 H12" stroke="#8d9296" stroke-width="1.1" fill="none"/></svg>
<svg style="position:absolute;left:45px;top:422px;overflow:visible" width="18" height="19" viewBox="0 0 18 19"><defs><linearGradient id="g20" x1="0" y1="0" x2="1" y2="1"><stop offset="0" stop-color="#f6fafa"/><stop offset="1" stop-color="#d8e6e6"/></linearGradient></defs><rect x="-0.5" y="16.2" width="16" height="3" rx="1.5" fill="#000" opacity="0.16"/><path d="M0.5 0.5 H10.5 L14.5 4.5 V17.5 H0.5 Z" fill="url(#g20)" stroke="#a3b3b3" stroke-width="1"/><path d="M0.5 17.5 H14.5" stroke="#8d9c9c" stroke-width="1"/><path d="M10.5 0.5 V4.5 H14.5" fill="#e3ecec" stroke="#a8b6b6" stroke-width="1"/><path d="M1.5 1.5 V16.5" stroke="#ffffff" stroke-width="1" opacity="0.8"/><rect x="8.6" y="13.2" width="8.8" height="3.6" rx="0.8" fill="#d42f3b" stroke="#b01e2a" stroke-width="0.6"/><rect x="9.4" y="13.8" width="7.2" height="1" fill="#ee7a82"/></svg>
<svg style="position:absolute;left:43px;top:460px;overflow:visible" width="19" height="17" viewBox="0 0 19 17"><defs><linearGradient id="g21" x1="0" y1="0" x2="0.5" y2="1"><stop offset="0" stop-color="#a2ec70"/><stop offset="1" stop-color="#58c030"/></linearGradient><linearGradient id="g22" x1="0" y1="0" x2="0.5" y2="1"><stop offset="0" stop-color="#6cd03c"/><stop offset="1" stop-color="#2c9412"/></linearGradient></defs><path d="M5.4 6.4 C7.5 2.8 10 1.8 12 2.1 C14.6 2.6 16.3 5 16.3 8.4" stroke="url(#g21)" stroke-width="3" fill="none"/><path d="M0.1 1.0 L0.1 9.6 L8.7 9.6 Z" fill="url(#g21)"/><path d="M13.6 10.6 C11.5 14.2 9 15.2 7 14.9 C4.4 14.4 2.7 12 2.7 8.6" stroke="url(#g22)" stroke-width="3" fill="none"/><path d="M18.9 16.0 L18.9 7.4 L10.3 7.4 Z" fill="url(#g22)"/></svg>
<svg style="position:absolute;left:236px;top:499px" width="8" height="11"><defs><linearGradient id="ar499" x1="0" y1="0" x2="1" y2="1"><stop offset="0" stop-color="#9cc2f2"/><stop offset="1" stop-color="#2f68c4"/></linearGradient></defs><path d="M1.5 0.5 L7 5.5 L1.5 10.5 Z" fill="url(#ar499)"/></svg>
<svg style="position:absolute;left:235px;top:530px" width="8" height="11"><defs><linearGradient id="ar530" x1="0" y1="0" x2="1" y2="1"><stop offset="0" stop-color="#9cc2f2"/><stop offset="1" stop-color="#2f68c4"/></linearGradient></defs><path d="M1.5 0.5 L7 5.5 L1.5 10.5 Z" fill="url(#ar530)"/></svg>
<div style="position:absolute;left:251px;top:521px;width:318px;height:64px;background:#f0f0f0;border:1px solid #99bbe8;border-bottom:none"></div>
<div style="position:absolute;left:283px;top:522px;width:1px;height:63px;background:#e0e0e0"></div>
<div style="position:absolute;left:284px;top:522px;width:1px;height:63px;background:#fff"></div>
<div style="position:absolute;left:254px;top:524px;width:313px;height:29px;border:1px solid #8eb5e6;border-radius:3px;background:linear-gradient(#e9f1fc,#c7dcf6)"></div>
<div style="position:absolute;left:291px;top:530.20px;font-size:13px;line-height:17px;color:#222;font-weight:normal;white-space:nowrap;">Сформировать акт о браке...</div>
<div style="position:absolute;left:291px;top:560.20px;font-size:13px;line-height:17px;color:#222;font-weight:normal;white-space:nowrap;">Сформировать маршрутный лист...</div>
</body></html>
